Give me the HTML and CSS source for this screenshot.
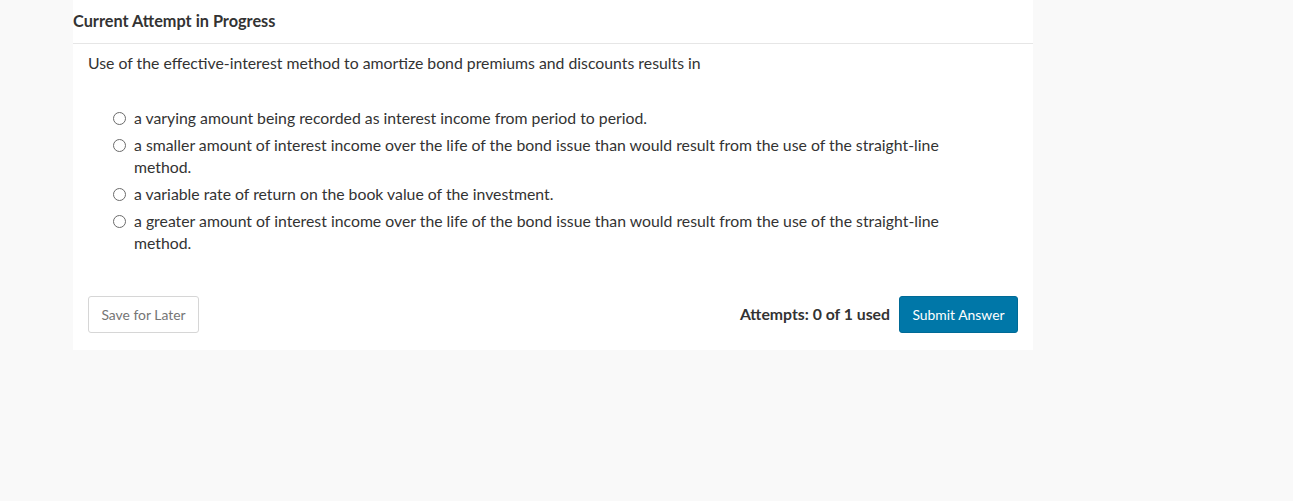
FILE: index.html
```html
<!DOCTYPE html>
<html lang="en">
<head>
<meta charset="utf-8">
<title>Current Attempt in Progress</title>
<link rel="stylesheet" href="styles.css">
</head>
<body>
<div class="panel">
  <div class="panel-header">Current Attempt in Progress</div>
  <div class="panel-body">
    <p class="question">Use of the effective-interest method to amortize bond premiums and discounts results in</p>
    <ul class="options">
      <li class="option"><span class="radio"></span><span class="label">a varying amount being recorded as interest income from period to period.</span></li>
      <li class="option"><span class="radio"></span><span class="label">a smaller amount of interest income over the life of the bond issue than would result from the use of the straight-line method.</span></li>
      <li class="option"><span class="radio"></span><span class="label">a variable rate of return on the book value of the investment.</span></li>
      <li class="option"><span class="radio"></span><span class="label">a greater amount of interest income over the life of the bond issue than would result from the use of the straight-line method.</span></li>
    </ul>
    <div class="actions">
      <button class="btn btn-secondary">Save for Later</button>
      <div class="actions-right">
        <span class="attempts">Attempts: 0 of 1 used</span>
        <button class="btn btn-primary">Submit Answer</button>
      </div>
    </div>
  </div>
</div>
</body>
</html>
```

FILE: styles.css
```css
html, body {
  margin: 0;
  padding: 0;
  background: #f9f9f9;
}
body {
  font-family: Lato, "Open Sans", "Liberation Sans", sans-serif;
  color: #333333;
}
.panel {
  margin-left: 73px;
  width: 960px;
  height: 350px;
  background: #ffffff;
  box-sizing: border-box;
}
.panel-header {
  height: 44px;
  box-sizing: border-box;
  padding-top: 11px;
  font-size: 16.3px;
  line-height: 20px;
  font-weight: 700;
  color: #333333;
  border-bottom: 1px solid #e6e6e6;
}
.panel-body {
  padding: 0 15px 17px 15px;
}
.question {
  margin: 8px 0 0 0;
  font-size: 15.8px;
  line-height: 22px;
}
.options {
  list-style: none;
  margin: 33px 0 0 0;
  padding: 0 0 0 25px;
  width: 880px;
}
.option {
  display: flex;
  align-items: flex-start;
  font-size: 15.8px;
  line-height: 22px;
  margin-bottom: 5px;
}
.radio {
  flex: none;
  width: 11px;
  height: 11px;
  border: 1px solid #6b6b6b;
  border-radius: 50%;
  margin-top: 5px;
  margin-right: 8px;
}
.actions {
  display: flex;
  justify-content: space-between;
  align-items: center;
  margin-top: 42px;
}
.actions-right {
  display: flex;
  align-items: center;
  gap: 9px;
}
.attempts {
  font-size: 15.8px;
  font-weight: 700;
  color: #333333;
  position: relative;
  top: -1px;
}
.btn {
  font-family: Lato, "Open Sans", "Liberation Sans", sans-serif;
  font-size: 13.9px;
  height: 37px;
  border-radius: 3px;
  padding: 0 8px;
  cursor: pointer;
}
.btn-secondary {
  background: #ffffff;
  color: #757575;
  border: 1px solid #d6d6d6;
  width: 111px;
  height: 37px;
}
.btn-primary {
  background: #0077a8;
  color: #ffffff;
  border: 1px solid #006a96;
  width: 119px;
}
```
